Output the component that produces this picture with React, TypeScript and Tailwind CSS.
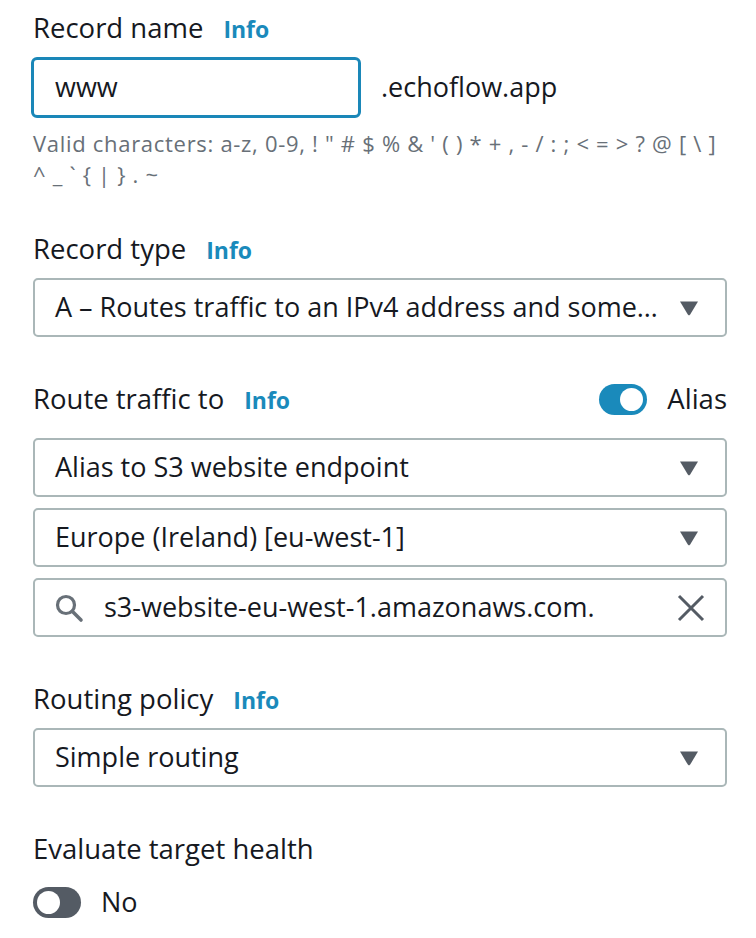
import React from 'react'

const font = { fontFamily: '"Open Sans", "Liberation Sans", sans-serif' }

function Caret() {
  return (
    <svg width="20" height="16" viewBox="0 0 20 16" className="shrink-0">
      <path d="M1 1.5 H19 L11.2 14.6 Q10 16.2 8.8 14.6 Z" fill="#545b64" />
    </svg>
  )
}

function Label({ text, info = true }: { text: string; info?: boolean }) {
  return (
    <div className="flex h-[36px] items-center text-[27.5px] leading-[36px] text-[#16191f]">
      <span>{text}</span>
      {info && <span className="ml-[20px] mt-[2px] text-[23px] font-bold leading-none text-[#1a8abb]">Info</span>}
    </div>
  )
}

function Select({ value }: { value: string }) {
  return (
    <div className="flex h-[59px] items-center rounded-[5px] border-2 border-[#aab7b8] bg-white pl-[20px] pr-[26px]">
      <span className="min-w-0 flex-1 whitespace-nowrap text-[27px] text-[#16191f]">{value}</span>
      <span className="ml-[14px]">
        <Caret />
      </span>
    </div>
  )
}

function Toggle({ on }: { on: boolean }) {
  return (
    <div
      className={
        on
          ? 'flex h-[31px] w-[48px] items-center justify-end rounded-full bg-[#1a8abb] pr-[4px]'
          : 'flex h-[31px] w-[48px] items-center justify-start rounded-full bg-[#545b64] pl-[4px]'
      }
    >
      <div className="h-[23px] w-[23px] rounded-full bg-white" />
    </div>
  )
}

export default function App() {
  return (
    <div className="min-h-[938px] w-[756px] bg-white pl-[33px] pr-[29px] pt-[10px]" style={font}>
      <Label text="Record name" />
      <div className="mt-[11px] flex items-center">
        <div className="-ml-[2px] flex h-[61px] w-[330px] items-center rounded-[6px] border-[3px] border-[#1a87b8] pl-[21px] text-[27px] text-[#16191f]">
          www
        </div>
        <span className="ml-[20px] text-[27px] text-[#16191f]">.echoflow.app</span>
      </div>
      <p className="mt-[10px] text-[22px] leading-[31px] tracking-[0.7px] text-[#687078]">
        Valid characters: a-z, 0-9, ! " # $ % &amp; ' ( ) * + , - / : ; &lt; = &gt; ? @ [ \ ]
        <br />^ _ ` {'{'} | {'}'} . ~
      </p>

      <div className="mt-[41px]">
        <Label text="Record type" />
      </div>
      <div className="mt-[11px]">
        <Select value="A – Routes traffic to an IPv4 address and some…" />
      </div>

      <div className="mt-[44px] flex items-center justify-between">
        <Label text="Route traffic to" />
        <div className="flex items-center gap-[20px]">
          <Toggle on />
          <span className="text-[27.5px] leading-[36px] text-[#16191f]">Alias</span>
        </div>
      </div>
      <div className="mt-[21px] flex flex-col gap-[11px]">
        <Select value="Alias to S3 website endpoint" />
        <Select value="Europe (Ireland) [eu-west-1]" />
        <div className="flex h-[59px] items-center rounded-[5px] border-2 border-[#aab7b8] bg-white pl-[19px] pr-[20px]">
          <svg width="30" height="30" viewBox="0 0 30 30" className="shrink-0">
            <circle cx="12" cy="12" r="8.5" fill="none" stroke="#687078" strokeWidth="3.2" />
            <path d="M18.5 18.5 L27 27" stroke="#687078" strokeWidth="3.6" strokeLinecap="round" />
          </svg>
          <span className="ml-[20px] min-w-0 flex-1 whitespace-nowrap text-[27px] text-[#16191f]">
            s3-website-eu-west-1.amazonaws.com.
          </span>
          <svg width="28" height="28" viewBox="0 0 28 28" className="shrink-0">
            <path d="M2 2 L26 26 M26 2 L2 26" stroke="#545b64" strokeWidth="3" />
          </svg>
        </div>
      </div>

      <div className="mt-[44px]">
        <Label text="Routing policy" />
      </div>
      <div className="mt-[11px]">
        <Select value="Simple routing" />
      </div>

      <div className="mt-[44px]">
        <Label text="Evaluate target health" info={false} />
      </div>
      <div className="mt-[15px] flex items-center gap-[20px]">
        <Toggle on={false} />
        <span className="text-[27px] text-[#16191f]">No</span>
      </div>
    </div>
  )
}
